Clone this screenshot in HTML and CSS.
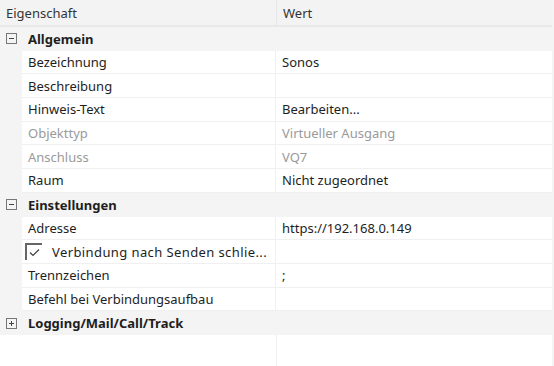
FILE: index.html
```html
<!DOCTYPE html>
<html lang="de">
<head>
<meta charset="UTF-8" />
<title>Eigenschaften</title>
<link rel="stylesheet" href="styles.css">
</head>
<body>
<div class="grid">
  <div class="head">
    <div class="head-name">Eigenschaft</div>
    <div class="head-value">Wert</div>
  </div>

  <div class="group">
    <span class="toggle minus"></span>
    <div class="group-name">Allgemein</div>
    <div class="group-value"></div>
  </div>
  <div class="item">
    <div class="gutter"></div>
    <div class="name">Bezeichnung</div>
    <div class="value">Sonos</div>
  </div>
  <div class="item">
    <div class="gutter"></div>
    <div class="name">Beschreibung</div>
    <div class="value"></div>
  </div>
  <div class="item">
    <div class="gutter"></div>
    <div class="name">Hinweis-Text</div>
    <div class="value">Bearbeiten...</div>
  </div>
  <div class="item disabled">
    <div class="gutter"></div>
    <div class="name">Objekttyp</div>
    <div class="value">Virtueller Ausgang</div>
  </div>
  <div class="item disabled">
    <div class="gutter"></div>
    <div class="name">Anschluss</div>
    <div class="value">VQ7</div>
  </div>
  <div class="item">
    <div class="gutter"></div>
    <div class="name">Raum</div>
    <div class="value">Nicht zugeordnet</div>
  </div>

  <div class="group">
    <span class="toggle minus"></span>
    <div class="group-name">Einstellungen</div>
    <div class="group-value"></div>
  </div>
  <div class="item">
    <div class="gutter"></div>
    <div class="name">Adresse</div>
    <div class="value">https://192.168.0.149</div>
  </div>
  <div class="item">
    <div class="gutter"></div>
    <div class="name check-name">
      <span class="checkbox">
        <svg width="11" height="9" viewBox="0 0 11 9"><path d="M1 4.5 L4 7.5 L10 1.5" fill="none" stroke="#444" stroke-width="1.2"/></svg>
      </span>
      <span class="check-label">Verbindung nach Senden schlie...</span>
    </div>
    <div class="value"></div>
  </div>
  <div class="item">
    <div class="gutter"></div>
    <div class="name">Trennzeichen</div>
    <div class="value">;</div>
  </div>
  <div class="item">
    <div class="gutter"></div>
    <div class="name">Befehl bei Verbindungsaufbau</div>
    <div class="value"></div>
  </div>

  <div class="group">
    <span class="toggle plus"></span>
    <div class="group-name">Logging/Mail/Call/Track</div>
    <div class="group-value"></div>
  </div>

  <div class="empty">
    <div class="empty-name"></div>
    <div class="empty-value"></div>
  </div>
</div>
</body>
</html>
```

FILE: styles.css
```css
body {
  margin: 0; background: #fff; color: #1e1e1e;
  font-family: "Noto Sans", "Open Sans", sans-serif; font-size: 13px;
  height: 100vh; overflow: hidden;
}
.grid {
  width: 552px; display: flex; flex-direction: column; height: 100%;
  border-right: 2px solid #f4f4f4;
}
.head {
  display: flex; height: 25px; background: #f3f3f3; border-bottom: 2px solid #e8e8e8;
  color: #333;
}
.head-name {
  width: 270px; padding-left: 6px; border-right: 1px solid #e6e6e6;
  display: flex; align-items: center;
}
.head-value {
  flex: 1; padding-left: 6px; display: flex; align-items: center;
}

.group {
  display: flex; align-items: center; height: 23.7px; background: #f4f4f4;
}
.group-name {
  font-weight: 700; width: 248px; padding-left: 5px;
}
.toggle {
  border: 1px solid #777; margin-left: 6px; margin-right: 6px;
  position: relative; box-sizing: border-box; width: 11px; height: 11px;
}
.toggle::before {
  content: ""; position: absolute; left: 2px; top: 4px; width: 5px; height: 1px; background: #444;
}
.toggle.plus::after {
  content: ""; position: absolute; left: 4px; top: 2px; width: 1px; height: 5px; background: #444;
}

.item {
  display: flex; height: 23.7px; background: #f4f4f4;
}
.gutter { width: 22px; }
.name, .value {
  background: #fff; border-bottom: 1px solid #f0f0f0; box-sizing: border-box;
  display: flex; align-items: center; padding-left: 6px; white-space: nowrap; overflow: hidden;
}
.name { width: 254px; border-right: 1px solid #f0f0f0; }
.value { flex: 1; }
.disabled .name, .disabled .value { color: #9a9a9a; }

.check-name { padding-left: 3px; }
.checkbox {
  width: 17px; height: 17px; box-sizing: border-box; flex: none;
  border-top: 2px solid #666; border-left: 2px solid #666;
  display: flex; align-items: center; justify-content: center; margin-right: 10px;
}
.check-label { letter-spacing: 0.4px; }

.empty {
  flex: 1; display: flex;
}
.empty-name { width: 276px; border-right: 1px solid #f0f0f0; }
.empty-value { flex: 1; }
```
